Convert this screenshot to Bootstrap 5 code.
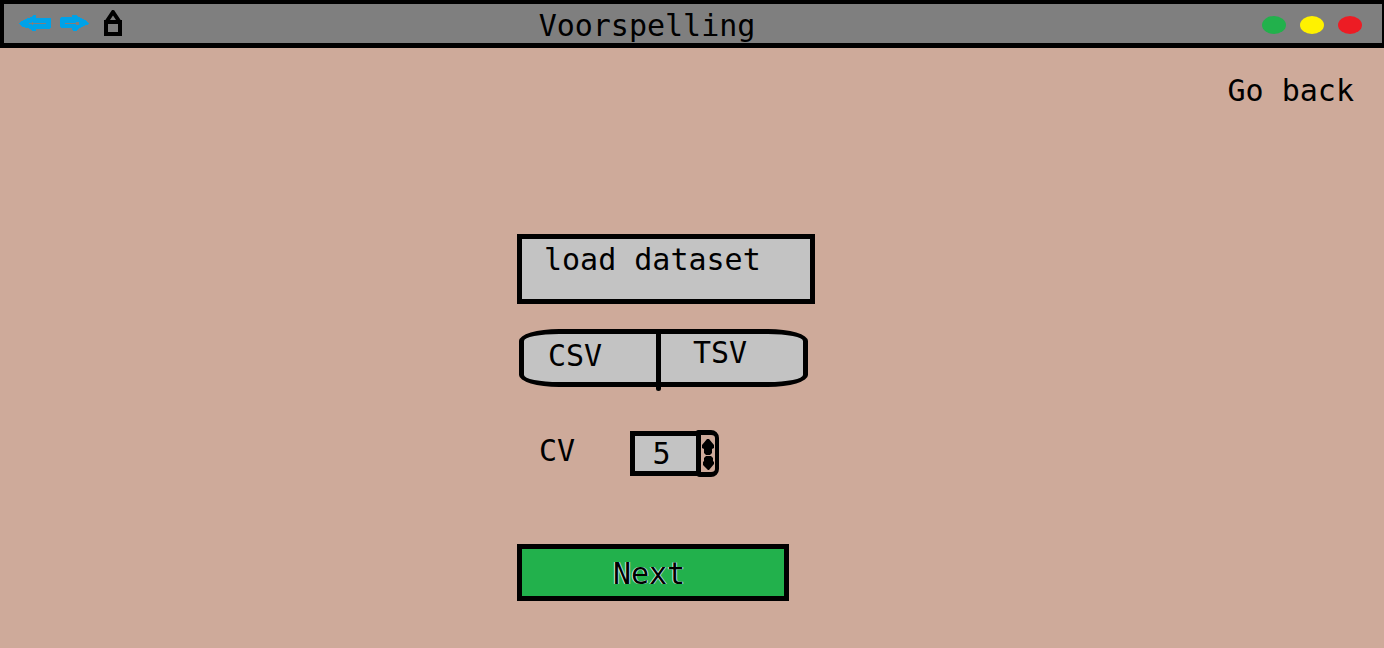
<!DOCTYPE html>
<html lang="en">
<head>
<meta charset="utf-8">
<meta name="viewport" content="width=device-width, initial-scale=1">
<title>Voorspelling</title>
<link href="https://cdn.jsdelivr.net/npm/bootstrap@5.3.0/dist/css/bootstrap.min.css" rel="stylesheet">
<style>
  body { background: #ceaa9a; color: #000; font-family: "DejaVu Sans Mono", monospace; font-size: 30px; line-height: 36px; }
  button { background: none; border: 0; padding: 0; color: #000; }
  .titlebar { background: #7f7f7f; border: solid #000; border-width: 4px 2px 5px 4px; height: 48px; }
  .bar-title { font-size: 30px; line-height: 36px; margin-right: 92px; padding-top: 4px; }
  .nav-icons { padding-left: 14px; }
  .dots { gap: 14px; padding: 2px 20px 0 0; }
  .dot { width: 24px; height: 18px; border-radius: 50%; }
  .dot-green { background: #22b14c; }
  .dot-yellow { background: #fff200; }
  .dot-red { background: #ed1c24; }
  .back-row { padding: 25px 30px 0 0; }
  main { padding: 125px 52px 40px 0; }
  .form-col { width: 298px; }
  .box { border: 5px solid #000; background: #c3c3c3; }
  .load { height: 70px; padding: 3px 22px; margin-bottom: 25px; white-space: nowrap; }
  .formats { width: 289px; height: 58px; border-radius: 40px / 12px; margin: 0 0 43px 2px; }
  .formats label { padding: 4px 0 0 24px; cursor: pointer; }
  .formats .csv { width: 132px; }
  .formats .tsv { padding: 1px 0 0 32px; }
  .formats .btn-check:focus-visible + label { text-decoration: underline; }
  .divider { width: 5px; height: 57px; background: #000; border-radius: 0 0 3px 3px; }
  .cv-label { width: 113px; padding: 0 0 6px 22px; }
  .count { width: 71px; height: 45px; border-radius: 0; padding: 0 8px 0 0; text-align: center; font: inherit; color: #000; appearance: textfield; -moz-appearance: textfield; }
  .count::-webkit-inner-spin-button { appearance: none; -webkit-appearance: none; margin: 0; }
  .spinner { width: 23px; height: 47px; border: 5px solid #000; border-width: 5px 4px 5px 5px; border-radius: 2px 8px 8px 4px; margin-left: -5px; background: #ceaa9a; padding-top: 4px; gap: 1px; }
  .next { background: #22b14c; border: 5px solid #000; width: 272px; height: 57px; margin-top: 67px; padding: 3px 8px 0 0; text-shadow: -1px 0 #d9f2e0, 1px 0 #a9d8e6; }
  svg { display: block; }
</style>
<script src="https://cdn.jsdelivr.net/npm/bootstrap@5.3.0/dist/js/bootstrap.bundle.min.js"></script>
</head>
<body>
<header class="titlebar d-flex align-items-center">
  <nav class="nav-icons d-flex align-items-center gap-2 flex-fill w-25" aria-label="History">
    <button type="button" aria-label="Back">
      <svg width="34" height="18" viewBox="0 0 34 18" shape-rendering="crispEdges"><path fill="#00a2e8" d="M1 8 L6 5 L13 2 L15 0 H18 V3 H32 L33 4 V12 L32 14 H18 V16 H14 L13 14 L5 12 L1 9 Z"/><path fill="#7f7f7f" d="M11 8 H14 V7 H15 V8 H28 V9 H15 V10 H14 V9 H11 Z"/></svg>
    </button>
    <button type="button" aria-label="Forward">
      <svg width="30" height="18" viewBox="0 0 30 18" shape-rendering="crispEdges"><path fill="#00a2e8" d="M0 3 L1 2 H12 V0 H16 L21 3 L25 5 L29 8 V9 L24 11 L20 13 L16 16 H13 L12 13 H1 L0 12 Z"/><path fill="#7f7f7f" d="M5 8 H16 V7 H19 V10 H16 V9 H5 Z"/></svg>
    </button>
    <button type="button" class="ms-1" aria-label="Home">
      <svg width="22" height="28" viewBox="0 0 22 28" fill="none" stroke="#000" stroke-width="4"><path d="M4 12 H18 V24 H4 Z"/><path d="M5 11 L11 2 L17 11" stroke-linejoin="round"/></svg>
    </button>
  </nav>
  <h1 class="bar-title mb-0 fw-normal">Voorspelling</h1>
  <div class="dots d-flex justify-content-end flex-fill w-25">
    <button type="button" class="dot dot-green" aria-label="Minimize"></button>
    <button type="button" class="dot dot-yellow" aria-label="Maximize"></button>
    <button type="button" class="dot dot-red" aria-label="Close"></button>
  </div>
</header>
<div class="back-row d-flex justify-content-end">
  <a href="#" class="text-reset text-decoration-none">Go back</a>
</div>
<main class="d-flex justify-content-center">
  <form class="form-col">
    <button type="button" class="box load d-flex align-items-start w-100">load dataset</button>
    <div class="box formats d-flex" role="group" aria-label="File format">
      <input type="radio" class="btn-check" name="format" id="csv" checked>
      <label for="csv" class="csv">CSV</label>
      <span class="divider"></span>
      <input type="radio" class="btn-check" name="format" id="tsv">
      <label for="tsv" class="tsv flex-fill">TSV</label>
    </div>
    <div class="d-flex align-items-center">
      <label for="cv" class="cv-label">CV</label>
      <input type="number" id="cv" class="box count" value="5" min="1">
      <div class="spinner d-flex flex-column align-items-center">
        <button type="button" aria-label="Increase" onclick="cv.stepUp()">
          <svg width="13" height="16" viewBox="0 0 13 16"><path d="M5 0 H7 L12 6 V9 L10 10 V14 L8 16 H4 L2 14 V10 L0 9 V6 Z"/></svg>
        </button>
        <button type="button" aria-label="Decrease" onclick="cv.stepDown()">
          <svg width="11" height="14" viewBox="0 0 11 14"><path d="M3 0 H8 L10 2 V5 L11 6 V8 L6 14 H5 L0 9 V6 L1 5 V2 Z"/></svg>
        </button>
      </div>
    </div>
    <button type="submit" class="next">Next</button>
  </form>
</main>
</body>
</html>
